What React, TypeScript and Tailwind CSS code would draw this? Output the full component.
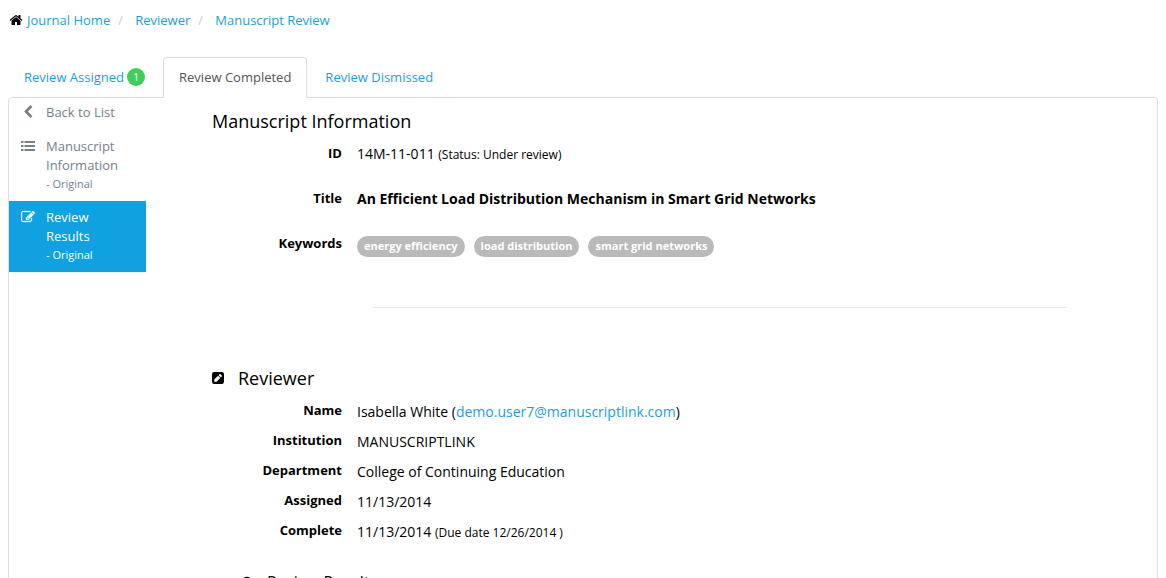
import type { ReactNode } from 'react';

const HOME =
  'M1472 992v480q0 26-19 45t-45 19h-384v-384h-256v384h-384q-26 0-45-19t-19-45v-480q0-1 .5-3t.5-3l575-474 575 474q1 2 1 6zm223-69l-62 74q-8 9-21 11h-3q-13 0-21-7l-692-577-692 577q-12 8-24 7-13-2-21-11l-62-74q-8-10-7-23.5t11-21.5l719-599q32-26 76-26t76 26l244 204v-195q0-14 9-23t23-9h192q14 0 23 9t9 23v408l219 182q10 8 11 21.5t-7 23.5z';
const CHEVRON_LEFT =
  'M1427 301l-531 531 531 531q19 19 19 45t-19 45l-166 166q-19 19-45 19t-45-19l-742-742q-19-19-19-45t19-45l742-742q19-19 45-19t45 19l166 166q19 19 19 45t-19 45z';
const LIST =
  'M0 256h320v256h-320zM0 768h320v256h-320zM0 1280h320v256h-320zM448 256h1344v256h-1344zM448 768h1344v256h-1344zM448 1280h1344v256h-1344z';
const EDIT =
  'M888 1184l116-116-152-152-116 116v56h96v96h56zm440-720q-16-16-33 1l-350 350q-17 17-1 33t33-1l350-350q17-17 1-33zm80 594v190q0 119-84.5 203.5t-203.5 84.5h-832q-119 0-203.5-84.5t-84.5-203.5v-832q0-119 84.5-203.5t203.5-84.5h832q63 0 117 25 15 7 18 23 3 17-9 29l-49 49q-14 14-32 8-23-6-45-6h-832q-66 0-113 47t-47 113v832q0 66 47 113t113 47h832q66 0 113-47t47-113v-126q0-13 9-22l64-64q15-15 35-7t20 29zm-96-738l288 288-672 672h-288v-288zm444 132l-92 92-288-288 92-92q28-28 68-28t68 28l152 152q28 28 28 68t-28 68z';
const PENCIL_SQUARE =
  'M416 128h960q288 0 288 288v960q0 288-288 288h-960q-288 0-288-288v-960q0-288 288-288zM416 1088v288h288l480-480-288-288zM976 528l288 288 112-112q64-64 0-128l-160-160q-64-64-128 0z';
const CHECK_CIRCLE =
  'M896 128a768 768 0 1 1 0 1536a768 768 0 1 1 0-1536zM416 928l352 352 608-608-144-144-464 464-208-208z';

function Icon({ d, className }: { d: string; className: string }) {
  return (
    <svg viewBox="0 0 1792 1792" fill="currentColor" fillRule="evenodd" aria-hidden="true" className={className}>
      <path d={d} />
    </svg>
  );
}

function Row({ label, children }: { label: string; children: ReactNode }) {
  return (
    <div className="flex gap-[15px]">
      <dt className="w-[130px] shrink-0 text-right text-[13px] leading-5 font-bold">{label}</dt>
      <dd className="min-w-0 pt-px text-sm">{children}</dd>
    </div>
  );
}

const keywords = ['energy efficiency', 'load distribution', 'smart grid networks'];

export default function App() {
  return (
    <div className="h-screen overflow-hidden bg-white px-2 font-['Open_Sans',sans-serif] text-[13px] leading-5 text-black">
      <nav aria-label="Breadcrumb" className="pt-[10px]">
        <ol className="flex items-center">
          <li className="flex items-center gap-1 pl-px">
            <Icon d={HOME} className="size-[14px]" />
            <a href="#home" className="text-[#189fdd]">Journal Home</a>
          </li>
          <li className="flex">
            <span className="w-[25px] pl-2 text-[#ccc]">/</span>
            <a href="#reviewer" className="text-[#189fdd]">Reviewer</a>
          </li>
          <li className="flex">
            <span className="w-[25px] pl-2 text-[#ccc]">/</span>
            <a href="#review" className="text-[#189fdd]">Manuscript Review</a>
          </li>
        </ol>
      </nav>

      <nav aria-label="Reviews" className="mt-[27px] flex">
        <a href="#assigned" className="mr-0.5 flex h-10 items-center gap-[3px] px-4 text-[#189fdd]">
          Review Assigned
          <span className="flex size-[18px] items-center justify-center rounded-full bg-[#3dcf58] text-[11px] text-white">1</span>
        </a>
        <a href="#completed" aria-current="page" className="relative z-10 -mb-px flex h-[41px] items-center rounded-t border border-b-0 border-[#ddd] bg-white px-[15px] pb-0.5 text-[#555]">
          Review Completed
        </a>
        <a href="#dismissed" className="ml-0.5 flex h-10 items-center px-4 text-[#189fdd]">Review Dismissed</a>
      </nav>

      <div className="flex min-h-screen rounded-t border border-[#ddd]">
        <nav aria-label="Manuscript" className="w-[137px] shrink-0 text-[#75818b]">
          <a href="#list" className="flex h-[34px] gap-[11px] pt-1 pl-3">
            <Icon d={CHEVRON_LEFT} className="mt-[3px] size-[14px]" />
            <span>Back to List</span>
          </a>
          <a href="#information" className="flex gap-[11px] pt-[5px] pl-3 pb-[7px]">
            <Icon d={LIST} className="mt-[2px] size-[14px]" />
            <span className="leading-[19px]">
              Manuscript<br />Information<br />
              <small className="block text-[11px] leading-[18px]">- Original</small>
            </span>
          </a>
          <a href="#results" className="mt-px flex gap-[11px] bg-[#0fa1e0] pt-[7px] pl-3 pb-2 text-white">
            <Icon d={EDIT} className="mt-[2px] size-[14px] stroke-current stroke-[40]" />
            <span className="leading-[19px]">
              Review<br />Results<br />
              <small className="block text-[11px] leading-[18px]">- Original</small>
            </span>
          </a>
        </nav>

        <main className="min-w-0 flex-1 pr-[91px] pl-[66px]">
          <h1 className="pt-[11px] text-lg leading-6">Manuscript Information</h1>
          <dl className="mt-[10px] flex flex-col gap-6">
            <Row label="ID">
              14M-11-011 <small className="text-xs">(Status: Under review)</small>
            </Row>
            <Row label="Title"><b>An Efficient Load Distribution Mechanism in Smart Grid Networks</b></Row>
            <Row label="Keywords">
              <ul className="flex flex-wrap gap-[9px] pt-0.5">
                {keywords.map((k) => (
                  <li key={k} className="rounded-full bg-[#bababa] px-[7px] pb-px text-[11px] leading-5 font-bold text-white">{k}</li>
                ))}
              </ul>
            </Row>
          </dl>
          <hr className="mt-[50px] ml-40 border-[#e7e7e7]" />

          <section className="pt-[58px]">
            <h2 className="-ml-px flex items-center gap-[13px] text-lg leading-6">
              <Icon d={PENCIL_SQUARE} className="size-[14px]" />
              Reviewer
            </h2>
            <dl className="mt-[10px] flex flex-col gap-[9px] [&_dd]:pt-0.5 [&_dd]:-mb-px">
              <Row label="Name">
                Isabella White (<a href="mailto:demo.user7@manuscriptlink.com" className="text-[#189fdd]">demo.user7@manuscriptlink.com</a>)
              </Row>
              <Row label="Institution">MANUSCRIPTLINK</Row>
              <Row label="Department">College of Continuing Education</Row>
              <Row label="Assigned">11/13/2014</Row>
              <Row label="Complete">
                11/13/2014 <small className="text-xs">(Due date 12/26/2014 )</small>
              </Row>
            </dl>
            <h3 className="mt-[29px] flex items-center gap-[14px] pl-[29px] text-base leading-6">
              <Icon d={CHECK_CIRCLE} className="size-3" />
              Review Results
            </h3>
          </section>
        </main>
      </div>
    </div>
  );
}
